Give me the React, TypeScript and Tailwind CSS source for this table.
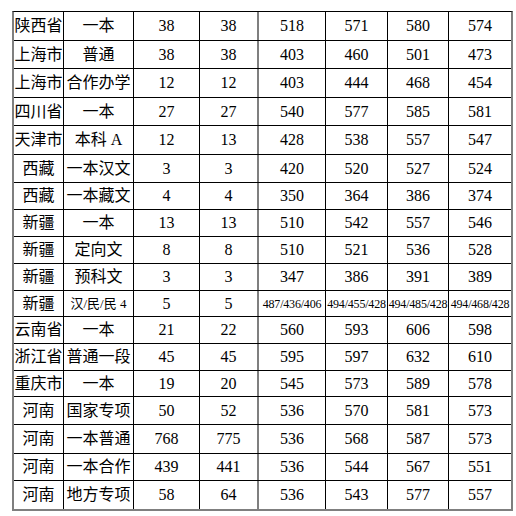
import React from "react";

const rows: { h: string; cells: string[] }[] = [
  { h: "h-[29px]", cells: ["陕西省", "一本", "38", "38", "518", "571", "580", "574"] },
  { h: "h-[28px]", cells: ["上海市", "普通", "38", "38", "403", "460", "501", "473"] },
  { h: "h-[29px]", cells: ["上海市", "合作办学", "12", "12", "403", "444", "468", "454"] },
  { h: "h-[28px]", cells: ["四川省", "一本", "27", "27", "540", "577", "585", "581"] },
  { h: "h-[29px]", cells: ["天津市", "本科 A", "12", "13", "428", "538", "557", "547"] },
  { h: "h-[28px]", cells: ["西藏", "一本汉文", "3", "3", "420", "520", "527", "524"] },
  { h: "h-[27px]", cells: ["西藏", "一本藏文", "4", "4", "350", "364", "386", "374"] },
  { h: "h-[27px]", cells: ["新疆", "一本", "13", "13", "510", "542", "557", "546"] },
  { h: "h-[27px]", cells: ["新疆", "定向文", "8", "8", "510", "521", "536", "528"] },
  { h: "h-[27px]", cells: ["新疆", "预科文", "3", "3", "347", "386", "391", "389"] },
  { h: "h-[26px]", cells: ["新疆", "汉/民/民 4", "5", "5", "487/436/406", "494/455/428", "494/485/428", "494/468/428"] },
  { h: "h-[27px]", cells: ["云南省", "一本", "21", "22", "560", "593", "606", "598"] },
  { h: "h-[27px]", cells: ["浙江省", "普通一段", "45", "45", "595", "597", "632", "610"] },
  { h: "h-[26px]", cells: ["重庆市", "一本", "19", "20", "545", "573", "589", "578"] },
  { h: "h-[28px]", cells: ["河南", "国家专项", "50", "52", "536", "570", "581", "573"] },
  { h: "h-[29px]", cells: ["河南", "一本普通", "768", "775", "536", "568", "587", "573"] },
  { h: "h-[27px]", cells: ["河南", "一本合作", "439", "441", "536", "544", "567", "551"] },
  { h: "h-[28px]", cells: ["河南", "地方专项", "58", "64", "536", "543", "577", "557"] },
];

const colClass = [
  "w-[50px] border-r border-black",
  "w-[70px] border-r border-black",
  "w-[66px] border-r border-black",
  "w-[59px] border-r-2 border-[#7f7f7f]",
  "w-[67px] border-r border-black",
  "w-[62px] border-r border-black",
  "w-[61px] border-r border-black",
  "w-[62px]",
];

const isSmall = (t: string) => t.includes("/");

const App = () => {
  return (
    <div className="w-[516px] h-[516px] bg-white pt-[11px] pl-[12px] font-['Liberation_Serif','Noto_Sans_CJK_SC',serif] text-black">
      <div className="w-[501px] border-t border-black border-l-2 border-r-2 border-b-2 border-l-[#7f7f7f] border-r-[#7f7f7f] border-b-[#7f7f7f]">
        {rows.map((row, i) => (
          <div
            key={i}
            className={`flex ${row.h} ${i < rows.length - 1 ? "border-b border-black" : ""}`}
          >
            {row.cells.map((c, j) => (
              <div
                key={j}
                className={`${colClass[j]} flex items-center justify-center whitespace-nowrap overflow-hidden ${
                  isSmall(c) ? (j === 1 ? "text-[13px]" : "text-[12px] tracking-[-0.2px]") : "text-[16px]"
                }`}
              >
                {c}
              </div>
            ))}
          </div>
        ))}
      </div>
    </div>
  );
};

export default App;
